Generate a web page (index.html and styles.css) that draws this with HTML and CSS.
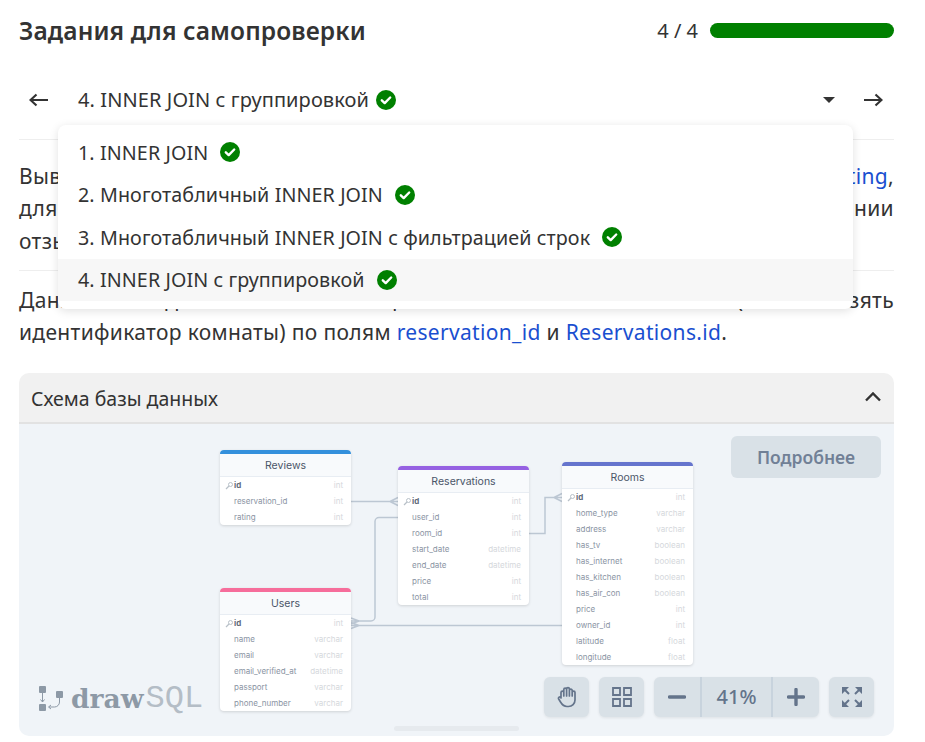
FILE: index.html
```html
<!DOCTYPE html>
<html lang="en">
<head>
  <meta charset="UTF-8" />
  <title>Задания для самопроверки</title>
  <link rel="stylesheet" href="styles.css">
</head>
<body>
<svg class="defs">
  <symbol id="check" viewBox="0 0 20 20">
    <circle cx="10" cy="10" r="10" fill="#008000"/>
    <path d="M5.800 10.300l2.900 2.800 5.500-5.600" fill="none" stroke="#fff" stroke-width="2.400" stroke-linecap="round" stroke-linejoin="round"/>
  </symbol>
  <symbol id="key" viewBox="0 0 8 8">
    <circle cx="5.500" cy="2.500" r="2" fill="none" stroke="#b8c0c8" stroke-width="1"/>
    <path d="M4 4L1 7" stroke="#b8c0c8" stroke-width="1.200"/>
  </symbol>
</svg>

<div class="page">
  <div class="top">
    <h2>Задания для самопроверки</h2>
    <div class="progress">
      <span>4 / 4</span>
      <div class="bar"></div>
    </div>
  </div>

  <div class="nav">
    <svg class="arrow" width="20" height="14" viewBox="0 0 20 14"><path d="M19 7H1.500M7.500 1.500L1.500 7l6 5.500" fill="none" stroke="#333" stroke-width="2.200"/></svg>
    <div class="current">4. INNER JOIN с группировкой <svg class="check" width="20" height="20"><use href="#check"/></svg></div>
    <div class="caret"></div>
    <svg class="arrow" width="20" height="14" viewBox="0 0 20 14"><path d="M1 7h17.500M12.500 1.500l6 5.500-6 5.500" fill="none" stroke="#333" stroke-width="2.200"/></svg>
  </div>

  <div class="menu">
    <div class="item">1. INNER JOIN <svg class="check" width="20" height="20"><use href="#check"/></svg></div>
    <div class="item">2. Многотабличный INNER JOIN <svg class="check" width="20" height="20"><use href="#check"/></svg></div>
    <div class="item">3. Многотабличный INNER JOIN с фильтрацией строк <svg class="check" width="20" height="20"><use href="#check"/></svg></div>
    <div class="item active">4. INNER JOIN с группировкой <svg class="check" width="20" height="20"><use href="#check"/></svg></div>
  </div>

  <div class="text">
    <span class="line">Выведите идентификаторы комнат и средний балл <a>Reviews.rating</a>,</span>
    <span class="line">для которых есть бронирования, с упоминанием в описании</span>
    <span>отзывов.</span>
  </div>
  <div class="text second">
    <span class="line">Данные соедините из таблиц Reviews и Reservations (чтобы взять</span>
    <span>идентификатор комнаты) по полям <a>reservation_id</a> и <a>Reservations.id</a>.</span>
  </div>

  <div class="schema">
    <div class="schema-head">
      <span>Схема базы данных</span>
      <svg width="18" height="12" viewBox="0 0 18 12"><path d="M2 9.500l7-7 7 7" fill="none" stroke="#333" stroke-width="2.400"/></svg>
    </div>
    <div class="diagram">
      <svg class="links" width="875" height="312" viewBox="0 0 875 312">
        <g fill="none" stroke="#bcc7d3" stroke-width="1.500">
          <path d="M332 77.500H379M371 77.500l8-4M371 77.500l8 4"/>
          <path d="M379 93.500H360a4 4 0 0 0-4 4V193a4 4 0 0 1-4 4H332M340 197l-8-3M340 197l-8 3"/>
          <path d="M510 109.500H526V73.500H543M535 73.500l8-4M535 73.500l8 4"/>
          <path d="M332 201.500H543M340 201.500l-8-3M340 201.500l-8 3"/>
        </g>
      </svg>

      <div class="tbl reviews">
        <div class="tbl-head">Reviews</div>
        <div class="row pk"><svg width="8" height="8"><use href="#key"/></svg><b>id</b><i>int</i></div>
        <div class="row"><b>reservation_id</b><i>int</i></div>
        <div class="row"><b>rating</b><i>int</i></div>
      </div>

      <div class="tbl reservations">
        <div class="tbl-head">Reservations</div>
        <div class="row pk"><svg width="8" height="8"><use href="#key"/></svg><b>id</b><i>int</i></div>
        <div class="row"><b>user_id</b><i>int</i></div>
        <div class="row"><b>room_id</b><i>int</i></div>
        <div class="row"><b>start_date</b><i>datetime</i></div>
        <div class="row"><b>end_date</b><i>datetime</i></div>
        <div class="row"><b>price</b><i>int</i></div>
        <div class="row"><b>total</b><i>int</i></div>
      </div>

      <div class="tbl rooms">
        <div class="tbl-head">Rooms</div>
        <div class="row pk"><svg width="8" height="8"><use href="#key"/></svg><b>id</b><i>int</i></div>
        <div class="row"><b>home_type</b><i>varchar</i></div>
        <div class="row"><b>address</b><i>varchar</i></div>
        <div class="row"><b>has_tv</b><i>boolean</i></div>
        <div class="row"><b>has_internet</b><i>boolean</i></div>
        <div class="row"><b>has_kitchen</b><i>boolean</i></div>
        <div class="row"><b>has_air_con</b><i>boolean</i></div>
        <div class="row"><b>price</b><i>int</i></div>
        <div class="row"><b>owner_id</b><i>int</i></div>
        <div class="row"><b>latitude</b><i>float</i></div>
        <div class="row"><b>longitude</b><i>float</i></div>
      </div>

      <div class="tbl users">
        <div class="tbl-head">Users</div>
        <div class="row pk"><svg width="8" height="8"><use href="#key"/></svg><b>id</b><i>int</i></div>
        <div class="row"><b>name</b><i>varchar</i></div>
        <div class="row"><b>email</b><i>varchar</i></div>
        <div class="row"><b>email_verified_at</b><i>datetime</i></div>
        <div class="row"><b>passport</b><i>varchar</i></div>
        <div class="row"><b>phone_number</b><i>varchar</i></div>
      </div>

      <div class="more">Подробнее</div>

      <div class="logo">
        <svg width="30" height="27" viewBox="0 0 30 27">
          <g fill="#8d99a6">
            <rect x="0" y="1" width="7" height="7" rx="1"/>
            <rect x="0" y="19" width="7" height="7" rx="1"/>
            <rect x="17" y="6" width="7" height="7" rx="1"/>
          </g>
          <path d="M3.500 8v9M1.500 14.500l2 2.500 2-2.500M20.500 13v4a5 5 0 0 1-5 5H10M12 20l-2.500 2 2.500 2" fill="none" stroke="#8d99a6" stroke-width="1"/>
        </svg>
        <span class="draw">draw</span><span class="sql">SQL</span>
      </div>

      <div class="tools">
        <div class="tool">
          <svg width="20" height="22" viewBox="0 0 20 22"><path d="M4 12V6.500a1.400 1.400 0 0 1 2.800 0V10M6.800 10V3.500a1.400 1.400 0 0 1 2.800 0V10M9.600 10V3a1.400 1.400 0 0 1 2.800 0v7M12.400 10V4.500a1.400 1.400 0 0 1 2.800 0V10M15.200 10V6.500a1.400 1.400 0 0 1 2.800 0V14a6.500 6.500 0 0 1-6.500 6.500h-1.500C6.500 20.500 5 18.500 3.500 16l-1.800-3c-.8-1.500 1-2.800 2.300-1.500" fill="none" stroke="#64748b" stroke-width="1.700" stroke-linecap="round" stroke-linejoin="round"/></svg>
        </div>
        <div class="tool">
          <svg width="20" height="20" viewBox="0 0 20 20"><path d="M1 1h7v7H1zM12 1h7v7h-7zM1 12h7v7H1zM12 12h7v7h-7z" fill="none" stroke="#64748b" stroke-width="1.800"/></svg>
        </div>
        <div class="zoom">
          <div class="zoom-btn"><svg width="18" height="4" viewBox="0 0 18 4"><path d="M1.500 2h15" stroke="#64748b" stroke-width="3.400" stroke-linecap="round"/></svg></div>
          <div class="zoom-val">41%</div>
          <div class="zoom-btn"><svg width="18" height="18" viewBox="0 0 18 18"><path d="M1.500 9h15M9 1.500v15" stroke="#64748b" stroke-width="3.400" stroke-linecap="round"/></svg></div>
        </div>
        <div class="tool">
          <svg width="20" height="20" viewBox="0 0 20 20"><g fill="#64748b"><path d="M0 0h7L0 7zM20 0v7l-7-7zM0 20v-7l7 7zM20 20h-7l7-7z"/></g><path d="M3 3l4 4M17 3l-4 4M3 17l4-4M17 17l-4-4" stroke="#64748b" stroke-width="2"/></svg>
        </div>
      </div>

      <div class="scroll"></div>
    </div>
  </div>
</div>
</body>
</html>
```

FILE: styles.css
```css
body {
  margin: 0;
  font-family: "Noto Sans", "Open Sans", sans-serif;
  color: #333;
  background: #fff;
  overflow: hidden;
}

.defs {
  display: none;
}

a {
  color: #1a4fd0;
}

.page {
  position: relative;
  width: 875px;
  height: 736px;
  margin-left: 19px;
}

.top {
  display: flex;
  align-items: center;
  justify-content: space-between;
  height: 61px;
}

h2 {
  margin: 0;
  font-size: 24.500px;
  font-weight: 600;
  letter-spacing: 0.12px;
}

.progress {
  display: flex;
  align-items: center;
  gap: 12px;
  font-size: 20px;
}

.bar {
  width: 184px;
  height: 15px;
  border-radius: 8px;
  background: #008000;
}

.nav {
  display: flex;
  align-items: center;
  height: 77px;
  border-bottom: 1px solid #eee;
  padding: 0 11px 1px 10px;
  margin-bottom: 19.500px;
  font-size: 20px;
  letter-spacing: 0.1px;
}

.current {
  display: flex;
  align-items: center;
  gap: 7px;
  flex: 1;
  margin-left: 29px;
}

.caret {
  width: 0;
  height: 0;
  border: 6px solid transparent;
  border-top: 6px solid #333;
  border-bottom: 0;
  margin-right: 28px;
}

.check {
  flex: none;
}

.menu {
  position: absolute;
  left: 39px;
  top: 125px;
  width: 795px;
  padding: 6px 0 8px;
  background: #fff;
  border-radius: 8px;
  box-shadow: 0 2px 10px rgba(0, 0, 0, 0.12);
  font-size: 19.700px;
  letter-spacing: 0.1px;
  z-index: 5;
}

.item {
  display: flex;
  align-items: center;
  gap: 12px;
  height: 42.500px;
  padding-left: 20px;
}

.item.active {
  background: #f7f7f7;
}

.text {
  font-size: 21px;
  letter-spacing: 0.33px;
  line-height: 32.500px;
  border-bottom: 1px solid #eee;
  padding-bottom: 12.500px;
}

.text span {
  display: block;
}

.text .line {
  text-align-last: justify;
}

.text.second {
  border-bottom: 0;
  margin-top: 13px;
  padding-bottom: 0;
}

.schema {
  margin-top: 24px;
  border-radius: 10px;
  overflow: hidden;
}

.schema-head {
  display: flex;
  align-items: center;
  justify-content: space-between;
  height: 49px;
  padding: 0 12px;
  background: #f1f1f1;
  border-bottom: 2px solid #e2e2e2;
  font-size: 19.500px;
}

.schema-head span {
  margin-top: 2px;
}

.diagram {
  position: relative;
  height: 312px;
  background: #f0f4f8;
}

.links {
  position: absolute;
  left: 0;
  top: 0;
}

.tbl {
  position: absolute;
  width: 131px;
  background: #fff;
  border-radius: 4px;
  box-shadow: 0 1px 3px rgba(0, 0, 0, 0.14);
  font-family: Inter, sans-serif;
  font-size: 8px;
  overflow: hidden;
}

.reviews { left: 201px; top: 26px; }
.reservations { left: 379px; top: 42px; }
.rooms { left: 543px; top: 38px; }
.users { left: 201px; top: 164px; }

.tbl-head {
  height: 22px;
  line-height: 24px;
  text-align: center;
  font-size: 10.500px;
  color: #4a5568;
  background: #f8fafc;
  border-top: 4px solid #3490dc;
  border-bottom: 1px solid #e8edf3;
}

.reservations .tbl-head { border-top-color: #9561e2; }
.rooms .tbl-head { border-top-color: #6574cd; }
.users .tbl-head { border-top-color: #f66d9b; }

.row {
  position: relative;
  display: flex;
  justify-content: space-between;
  height: 16px;
  line-height: 17px;
  padding: 0 8px 0 14px;
}

.row svg {
  position: absolute;
  left: 5px;
  top: 5px;
}

.row b {
  font-weight: 400;
  color: #8a94a3;
}

.row i {
  font-style: normal;
  color: #d5d8dc;
}

.row.pk b {
  font-weight: 700;
  color: #5f6b7a;
}

.more {
  position: absolute;
  right: 13px;
  top: 12px;
  width: 150px;
  height: 42px;
  line-height: 42px;
  text-align: center;
  border-radius: 6px;
  background: #d9e1e7;
  color: #718096;
  font-size: 17.500px;
  font-weight: 600;
}

.logo {
  position: absolute;
  left: 20px;
  top: 261px;
  display: flex;
  align-items: center;
  gap: 2px;
  color: #8d99a6;
  line-height: 27px;
}

.draw {
  font-family: "DejaVu Serif", serif;
  font-weight: 700;
  font-size: 26.500px;
}

.sql {
  font-family: "Liberation Mono", monospace;
  font-size: 32px;
  color: #b4bdc6;
}

.tools {
  position: absolute;
  left: 525px;
  top: 253px;
  display: flex;
  gap: 10px;
}

.tool,
.zoom {
  display: flex;
  align-items: center;
  justify-content: center;
  height: 40px;
  border-radius: 6px;
  background: #d9e1e7;
  box-shadow: 0 1px 3px rgba(0, 0, 0, 0.08);
}

.tool {
  width: 45px;
}

.zoom-btn {
  display: flex;
  align-items: center;
  justify-content: center;
  width: 46px;
  height: 40px;
}

.zoom-val {
  width: 69px;
  line-height: 40px;
  text-align: center;
  border-left: 2px solid #c8d3dd;
  border-right: 2px solid #c8d3dd;
  color: #64748b;
  font-size: 20px;
  font-weight: 500;
}

.scroll {
  position: absolute;
  left: 375px;
  top: 302px;
  width: 125px;
  height: 5px;
  border-radius: 3px;
  background: #e6eaee;
}
```
